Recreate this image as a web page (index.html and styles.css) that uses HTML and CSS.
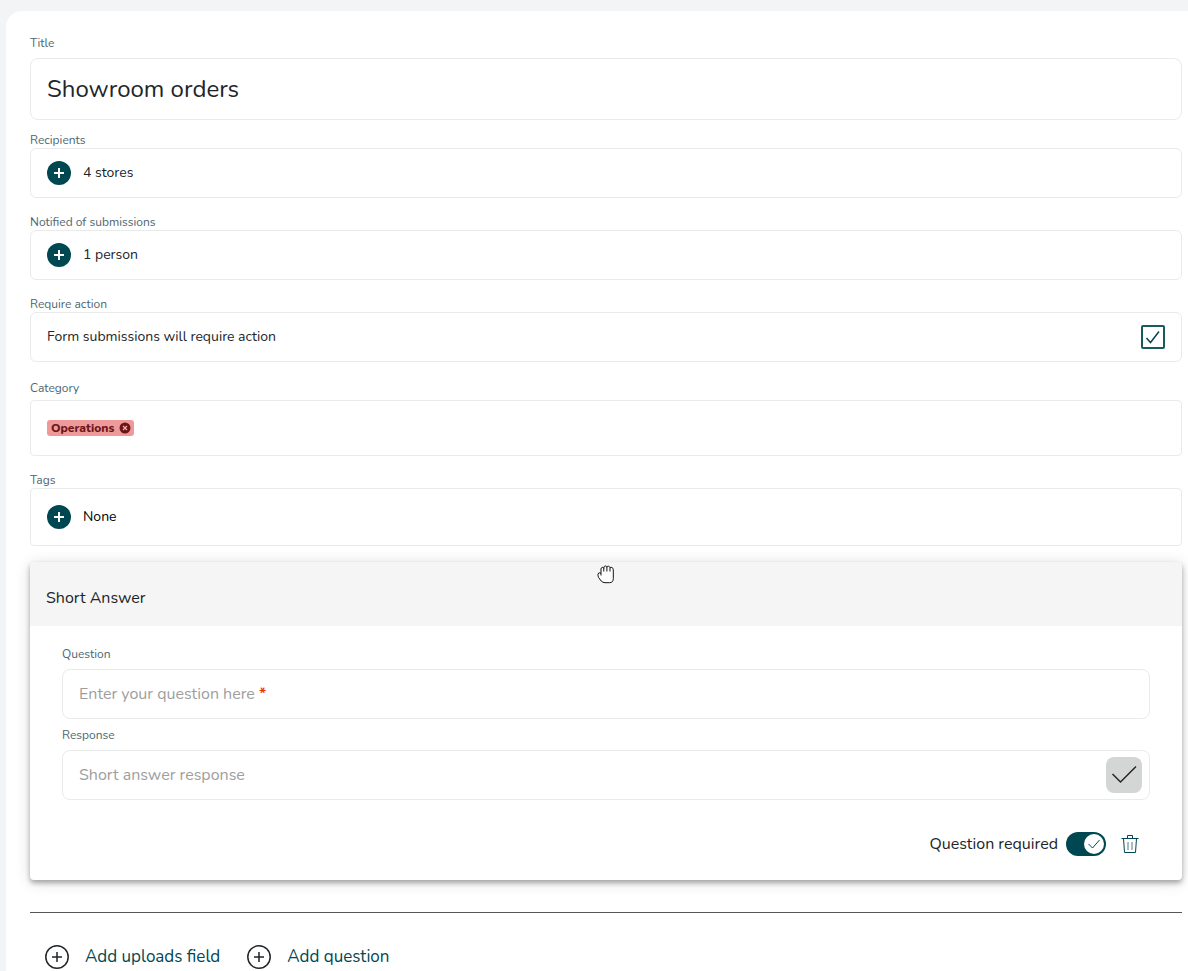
FILE: index.html
```html
<!DOCTYPE html>
<html lang="en">
<head>
  <meta charset="UTF-8">
  <meta name="viewport" content="width=device-width, initial-scale=1">
  <title>Showroom orders</title>
  <link rel="stylesheet" href="styles.css">
</head>
<body>
  <main class="sheet">
    <form>
      <div class="field">
        <label class="label spaced" for="title">Title</label>
        <input class="box title-input" id="title" type="text" value="Showroom orders">
      </div>

      <div class="field">
        <span class="label" id="recipients-label">Recipients</span>
        <div class="box row" role="group" aria-labelledby="recipients-label">
          <button class="add" type="button" aria-label="Add recipients">
            <svg viewBox="0 0 24 24"><path d="M12 7v10M7 12h10"/></svg>
          </button>
          <span>4 stores</span>
        </div>
      </div>

      <div class="field">
        <span class="label" id="notified-label">Notified of submissions</span>
        <div class="box row" role="group" aria-labelledby="notified-label">
          <button class="add" type="button" aria-label="Add person">
            <svg viewBox="0 0 24 24"><path d="M12 7v10M7 12h10"/></svg>
          </button>
          <span>1 person</span>
        </div>
      </div>

      <div class="field">
        <span class="label">Require action</span>
        <div class="box row">
          <label class="grow" for="require">Form submissions will require action</label>
          <span class="check">
            <input id="require" type="checkbox" checked>
            <svg viewBox="0 0 24 24"><path d="M5.500 13l4 4.500L18 6.500"/></svg>
          </span>
        </div>
      </div>

      <div class="field category">
        <span class="label">Category</span>
        <div class="box row category-box">
          <span class="chip">
            Operations
            <button type="button" aria-label="Remove Operations">
              <svg viewBox="0 0 12 12"><circle cx="6" cy="6" r="5.500"/><path d="M4 4l4 4M8 4L4 8"/></svg>
            </button>
          </span>
        </div>
      </div>

      <div class="field">
        <span class="label" id="tags-label">Tags</span>
        <div class="box row tags-box" role="group" aria-labelledby="tags-label">
          <button class="add" type="button" aria-label="Add tags">
            <svg viewBox="0 0 24 24"><path d="M12 7v10M7 12h10"/></svg>
          </button>
          <span>None</span>
        </div>
      </div>

      <section class="question">
        <header class="question-head">
          <h2>Short Answer</h2>
          <svg class="grab" viewBox="0 0 18 20">
            <path d="M4 11.500V5C4 3 6.500 2.800 6.800 4.200C6.800 1.400 9.600 1.400 9.900 3.200C10.300 1.600 12.700 1.900 13 3.800C13.600 2.800 16.300 3.200 16.300 5.800V14.500Q16.300 18.700 12.500 18.700H8Q5.800 18.700 4.200 17L1.600 13.500Q.8 12 1 10.200Q1.400 8.600 2.800 8.800L4 9.400M6.800 4v3.500M9.900 3v4.500M13 4v3.500"/>
          </svg>
        </header>
        <div class="question-body">
          <label class="label spaced" for="question">Question</label>
          <div class="entry">
            <input class="box" id="question" type="text" placeholder=" " required>
            <span class="hint" aria-hidden="true">Enter your question here <b>*</b></span>
          </div>
          <label class="label spaced response-label" for="response">Response</label>
          <div class="box response">
            <input id="response" type="text" placeholder="Short answer response">
            <button type="button" aria-label="Confirm response">
              <svg viewBox="0 0 36 36"><path d="M6.500 17l8 8L30 9.500"/></svg>
            </button>
          </div>
          <div class="question-foot">
            <label for="required">Question required</label>
            <span class="toggle">
              <input id="required" type="checkbox" role="switch" checked>
              <svg viewBox="0 0 20 20"><path d="M4.500 10l4 4L15.500 6"/></svg>
            </span>
            <button class="trash" type="button" aria-label="Delete question">
              <svg viewBox="0 0 20 20"><path d="M1.500 4.500h17M7.500 4.500v-3h5v3M3.500 4.500l1 14h11l1-14"/><path class="thin" d="M8 8v8M12 8v8"/></svg>
            </button>
          </div>
        </div>
      </section>

      <div class="actions">
        <button type="button">
          <svg viewBox="0 0 24 24"><circle cx="12" cy="12" r="11.200"/><path d="M12 7v10M7 12h10"/></svg>
          Add uploads field
        </button>
        <button type="button">
          <svg viewBox="0 0 24 24"><circle cx="12" cy="12" r="11.200"/><path d="M12 7v10M7 12h10"/></svg>
          Add question
        </button>
      </div>
    </form>
  </main>
</body>
</html>
```

FILE: styles.css
```css
* {
  box-sizing: border-box;
}

body {
  display: flex;
  min-height: 100vh;
  margin: 0;
  padding: 11px 0 0 6px;
  background: #f3f4f6;
  color: #212529;
  font-family: Nunito, "Open Sans", sans-serif;
  font-size: 14px;
  line-height: 24px;
}

input,
button {
  font: inherit;
  color: inherit;
}

button {
  margin: 0;
  padding: 0;
  border: 0;
  background: none;
  cursor: pointer;
}

svg {
  display: block;
  fill: none;
  stroke: currentColor;
}

.sheet {
  flex: 1;
  padding: 24px 6px 0 24px;
  border-radius: 16px 0 0 0;
  background: #fff;
}

.field {
  margin-bottom: 16px;
}

.label {
  display: block;
  color: #4d6670;
  font-size: 12px;
  line-height: 16px;
}

.spaced {
  margin-bottom: 7px;
}

.box {
  display: block;
  width: 100%;
  height: 50px;
  padding: 0 16px;
  border: 1px solid #e9eaea;
  border-radius: 6px;
  background: #fff;
}

.title-input {
  height: 62px;
  border-radius: 8px;
  font-size: 24px;
}

.field:has(.title-input) {
  margin-bottom: 12px;
}

.row {
  display: flex;
  align-items: center;
  gap: 12px;
}

.grow {
  flex: 1;
}

.add {
  width: 24px;
  height: 24px;
  border-radius: 50%;
  background: #004851;
  color: #fff;
}

.add svg {
  stroke-width: 2;
}

.check,
.toggle {
  display: grid;
}

.check > *,
.toggle > * {
  grid-area: 1 / 1;
  margin: 0;
}

.check input {
  width: 24px;
  height: 24px;
  border: 2px solid #1a5a62;
  border-radius: 2px;
  appearance: none;
}

.check svg {
  width: 24px;
  height: 24px;
  color: #004851;
  stroke-width: 1.5;
  pointer-events: none;
}

input:not(:checked) + svg {
  visibility: hidden;
}

.category {
  margin-top: 18px;
}

.category-box {
  height: 56px;
  margin-top: 4px;
  border-radius: 4px;
}

.tags-box {
  height: 58px;
  border-radius: 4px;
  color: #000;
}

.chip {
  display: flex;
  align-items: center;
  gap: 5px;
  height: 16px;
  padding: 0 3px 0 4px;
  border-radius: 3px;
  background: #ef9a9a;
  color: #6b1518;
  font-size: 12px;
  font-weight: 800;
  line-height: 16px;
}

.chip svg {
  width: 12px;
  height: 12px;
}

.chip circle {
  fill: #6b1518;
  stroke: none;
}

.chip path {
  stroke: #f3b0b0;
  stroke-width: 1.2;
}

.question {
  border-radius: 4px;
  background: #fff;
  box-shadow: 0 3px 5px rgba(0, 0, 0, 0.3), 0 2px 16px rgba(0, 0, 0, 0.14);
  font-size: 16px;
}

.question-head {
  position: relative;
  display: flex;
  align-items: center;
  height: 64px;
  padding: 8px 16px 0;
  border-radius: 4px 4px 0 0;
  background: #f5f5f5;
}

.question-head h2 {
  margin: 0;
  font-size: 16px;
  font-weight: 400;
}

.grab {
  position: absolute;
  top: 2px;
  left: 50%;
  width: 18px;
  height: 20px;
  margin-left: -9px;
  color: #111;
  fill: #fff;
  cursor: grab;
}

.question-body {
  padding: 20px 32px 24px;
}

.question-body .box {
  border-radius: 8px;
}

.entry {
  position: relative;
}

.hint {
  position: absolute;
  top: 13px;
  left: 17px;
  color: #9e9e9e;
  pointer-events: none;
}

.hint b {
  color: #f03800;
}

.entry input:not(:placeholder-shown) + .hint {
  display: none;
}

.response-label {
  margin-top: 8px;
}

.response {
  display: flex;
  align-items: center;
  padding-right: 7px;
}

.response input {
  flex: 1;
  min-width: 0;
  padding: 0;
  border: 0;
  outline: 0;
}

.response input::placeholder {
  color: #9e9e9e;
}

.response button {
  width: 36px;
  height: 36px;
  border-radius: 8px;
  background: #d4d6d5;
}

.response svg {
  stroke-width: 1.5;
}

.question-foot {
  display: flex;
  align-items: center;
  justify-content: flex-end;
  gap: 8px;
  margin-top: 32px;
  padding-right: 10px;
}

.toggle {
  align-items: center;
  justify-items: end;
}

.toggle input {
  width: 40px;
  height: 24px;
  border-radius: 12px;
  background: #004851;
  appearance: none;
}

.toggle svg {
  width: 20px;
  height: 20px;
  margin-right: 2px;
  border-radius: 50%;
  background: #fff;
  color: #004851;
  pointer-events: none;
}

.trash {
  margin-left: 6px;
  color: #004851;
}

.trash svg {
  width: 20px;
  height: 20px;
}

.trash .thin {
  opacity: 0.7;
}

.actions {
  display: flex;
  gap: 27px;
  margin-top: 32px;
  padding: 32px 15px 0;
  border-top: 1px solid #55585a;
}

.actions button {
  display: flex;
  align-items: center;
  gap: 16px;
  color: #004851;
  font-size: 17px;
}

.actions svg {
  width: 24px;
  height: 24px;
  color: #212529;
  stroke-width: 1.5;
}
```
